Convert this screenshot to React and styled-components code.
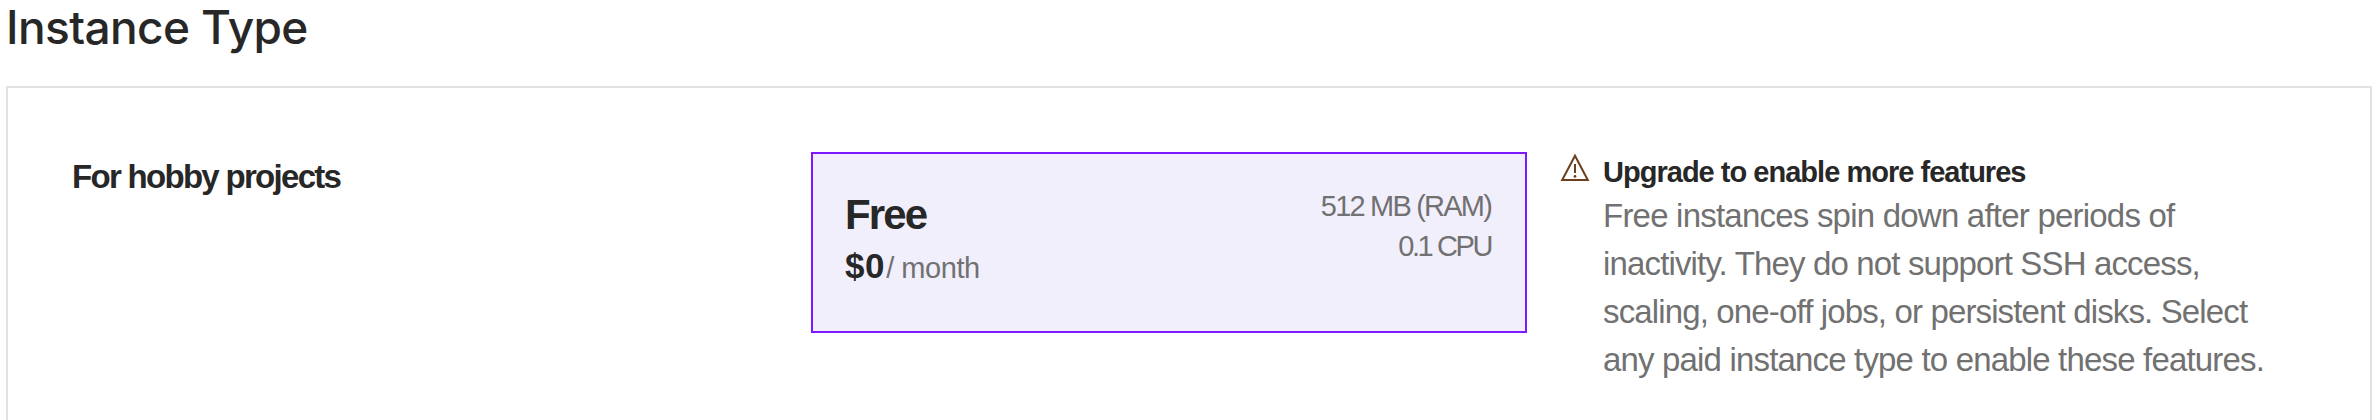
import React from "react";
import styled, { createGlobalStyle } from "styled-components";

const GlobalStyle = createGlobalStyle`
  * { box-sizing: border-box; }
  html, body { margin: 0; background: #fff; }
  body { height: 420px; overflow: hidden; }
`;

const Section = styled.section`
  height: 420px;
  overflow: hidden;
  padding: 0 2px 0 6px;
  display: flex;
  flex-direction: column;
  background: #fff;
  color: #272727;
  font-family: "Liberation Sans", Arial, sans-serif;
`;

const Heading = styled.h2`
  margin: 0 0 32px;
  font: 450 46px/54px Inter, sans-serif;
  letter-spacing: -0.6px;
  white-space: nowrap;
`;

const Panel = styled.div`
  flex: none;
  height: 400px;
  border: 2px solid #e2e2e2;
  padding: 64px;
  display: grid;
  grid-template-columns: 739px 716px 1fr;
  align-items: start;
`;

const GroupLabel = styled.h3`
  margin: 0;
  font-size: 33px;
  line-height: 50px;
  font-weight: 700;
  letter-spacing: -1.7px;
`;

const PlanCard = styled.div`
  height: 181px;
  padding: 32px;
  border: 2px solid #7f17ff;
  background: #f2effd;
  display: flex;
  justify-content: space-between;
`;

const PlanName = styled.div`
  font-size: 42px;
  line-height: 57px;
  font-weight: 700;
  letter-spacing: -1.9px;
`;

const PriceRow = styled.div`
  display: flex;
  align-items: baseline;
  line-height: 46px;
`;

const Price = styled.span`
  font-size: 35px;
  font-weight: 700;
  letter-spacing: 0.6px;
`;

const Period = styled.span`
  margin-left: 1px;
  font-size: 29px;
  letter-spacing: -0.45px;
  color: #717171;
`;

const Specs = styled.div`
  display: flex;
  flex-direction: column;
  align-items: flex-end;
  padding-right: 2px;
`;

const Spec = styled.span`
  font-size: 29px;
  line-height: 40px;
  color: #717171;
  letter-spacing: ${(p) => p.$tracking}px;
`;

const Notice = styled.aside`
  display: flex;
  padding-left: 33px;
`;

const NoticeIcon = styled.svg`
  flex: none;
  width: 30px;
  height: 30px;
  margin: 1px 13px 0 0;
`;

const NoticeTitle = styled.div`
  font-size: 29px;
  line-height: 40px;
  font-weight: 700;
  letter-spacing: -0.98px;
  white-space: nowrap;
`;

const NoticeText = styled.p`
  margin: 0;
  font-size: 33px;
  line-height: 48px;
  color: #717171;
`;

const Line = styled.span`
  display: block;
  white-space: nowrap;
  letter-spacing: ${(p) => p.$tracking}px;
`;

const noticeLines = [
  ["Free instances spin down after periods of", -0.78],
  ["inactivity. They do not support SSH access,", -0.85],
  ["scaling, one-off jobs, or persistent disks. Select", -0.86],
  ["any paid instance type to enable these features.", -0.83],
];

export default function App() {
  return (
    <>
      <GlobalStyle />
      <Section>
        <Heading>Instance Type</Heading>
        <Panel>
          <GroupLabel>For hobby projects</GroupLabel>
          <PlanCard>
            <div>
              <PlanName>Free</PlanName>
              <PriceRow>
                <Price>$0</Price>
                <Period>/ month</Period>
              </PriceRow>
            </div>
            <Specs>
              <Spec $tracking={-1.8}>512 MB (RAM)</Spec>
              <Spec $tracking={-2.4}>0.1 CPU</Spec>
            </Specs>
          </PlanCard>
          <Notice>
            <NoticeIcon viewBox="0 0 30 30" fill="none" aria-hidden="true">
              <path d="M15 2.7 L27.8 27 H2.2 Z" stroke="#6b3f1d" strokeWidth="2" />
              <path d="M15 11 V20" stroke="#6b3f1d" strokeWidth="2" />
              <circle cx="15" cy="23.4" r="1.4" fill="#6b3f1d" />
            </NoticeIcon>
            <div>
              <NoticeTitle>Upgrade to enable more features</NoticeTitle>
              <NoticeText>
                {noticeLines.map(([text, tracking]) => (
                  <Line key={text} $tracking={tracking}>{text}</Line>
                ))}
              </NoticeText>
            </div>
          </Notice>
        </Panel>
      </Section>
    </>
  );
}
